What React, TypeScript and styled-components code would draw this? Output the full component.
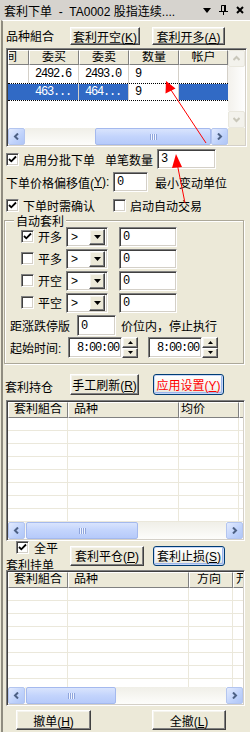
import styled, { createGlobalStyle, css } from "styled-components";

const FONT = `"Liberation Sans", "Noto Sans CJK SC", sans-serif`;
const MONO = `"Liberation Mono", "Noto Sans CJK SC", monospace`;

const GlobalStyle = createGlobalStyle`
  html, body {
    margin: 0;
    padding: 0;
    background: #ece9d8;
  }
  body {
    font-family: ${FONT};
    font-size: 12px;
    color: #000;
  }
`;

const sunken = css`
  border: 1px solid;
  border-color: #808080 #ffffff #ffffff #808080;
  box-shadow: inset 1px 1px 0 #404040, inset -1px -1px 0 #d4d0c8;
`;

const raised = css`
  border: 1px solid;
  border-color: #ffffff #404040 #404040 #ffffff;
  box-shadow: inset -1px -1px 0 #808080, inset 1px 1px 0 #f5f4ee;
`;

const Window = styled.div`
  position: relative;
  width: 250px;
  height: 732px;
  overflow: hidden;
  background: #ece9d8;
  display: flex;
  flex-direction: column;
`;

const TitleBar = styled.div`
  flex: none;
  height: 20px;
  display: flex;
  align-items: center;
  padding-left: 4px;
  background: #d6d3ce;
`;

const TitleText = styled.span`
  white-space: pre;
  font-size: 12px;
`;

const TitleIcons = styled.div`
  margin-left: auto;
  margin-right: 6px;
  display: flex;
  align-items: center;
  gap: 8px;
`;

const Body = styled.div`
  flex: 1;
  margin-left: 1px;
  border-left: 2px solid #8f8c80;
  border-top: 1px solid #ffffff;
  display: flex;
  flex-direction: column;
`;

const Row = styled.div<{ $h: number; $mt?: number; $pl?: number }>`
  flex: none;
  display: flex;
  align-items: center;
  height: ${(p) => p.$h}px;
  margin-top: ${(p) => p.$mt ?? 0}px;
  padding-left: ${(p) => p.$pl ?? 0}px;
`;

const Slot = styled.div<{ $w: number; $ml?: number; $bottom?: boolean }>`
  flex: none;
  width: ${(p) => p.$w}px;
  margin-left: ${(p) => p.$ml ?? 0}px;
  align-self: ${(p) => (p.$bottom ? "flex-end" : "auto")};
  display: flex;
  align-items: center;
  white-space: nowrap;
`;

const Text = styled.span<{ $ml?: number }>`
  margin-left: ${(p) => p.$ml ?? 0}px;
  white-space: nowrap;
`;

const Btn = styled.button<{ $w: number; $h: number; $ml?: number; $focus?: boolean; $red?: boolean }>`
  flex: none;
  width: ${(p) => p.$w}px;
  height: ${(p) => p.$h}px;
  margin: 0 0 0 ${(p) => p.$ml ?? 0}px;
  padding: 0;
  box-sizing: border-box;
  font-family: ${FONT};
  font-size: 12px;
  color: ${(p) => (p.$red ? "#ff0000" : "#000")};
  background: #ece9d8;
  ${raised};
  ${(p) =>
    p.$focus &&
    css`
      border: 1px solid #003c74;
      border-radius: 3px;
      background: linear-gradient(#ffffff, #f4f3ee 70%, #e3dfd3);
      box-shadow: inset 0 0 0 1px #c6d6f7, inset -1px -1px 0 1px #9bb5ea;
    `}

  u {
    text-decoration: underline;
  }
`;

const CheckItem = styled.label<{ $w?: number; $ml?: number; $gap?: number }>`
  flex: none;
  display: flex;
  align-items: center;
  gap: ${(p) => p.$gap ?? 4}px;
  width: ${(p) => (p.$w ? `${p.$w}px` : "auto")};
  margin-left: ${(p) => p.$ml ?? 0}px;
  white-space: nowrap;
`;

const Box = styled.span`
  flex: none;
  width: 13px;
  height: 13px;
  box-sizing: border-box;
  background: #fff;
  ${sunken};
  display: flex;
  align-items: center;
  justify-content: center;
`;

const TextBox = styled.div<{ $w: number; $h: number; $ml?: number }>`
  flex: none;
  width: ${(p) => p.$w}px;
  height: ${(p) => p.$h}px;
  margin-left: ${(p) => p.$ml ?? 0}px;
  box-sizing: border-box;
  background: #fff;
  ${sunken};
  padding-left: 3px;
  display: flex;
  align-items: center;
  font-family: ${MONO};
  font-size: 12px;
  letter-spacing: -1.2px;
`;

const Combo = styled.div`
  flex: none;
  width: 42px;
  height: 20px;
  box-sizing: border-box;
  background: #fff;
  ${sunken};
  padding: 2px 2px 2px 4px;
  display: flex;
  align-items: center;
  justify-content: space-between;
`;

const DropBtn = styled.div`
  width: 16px;
  height: 16px;
  box-sizing: border-box;
  background: #ece9d8;
  ${raised};
  display: flex;
  align-items: center;
  justify-content: center;
`;

const TimeBox = styled.div<{ $ml?: number }>`
  flex: none;
  display: flex;
  height: 21px;
  margin-left: ${(p) => p.$ml ?? 0}px;
`;

const TimeField = styled.div<{ $w: number }>`
  width: ${(p) => p.$w}px;
  box-sizing: border-box;
  background: #fff;
  ${sunken};
  padding-left: 8px;
  display: flex;
  align-items: center;
  font-family: ${MONO};
  font-size: 12px;
  letter-spacing: -1.2px;
`;

const Spin = styled.div`
  width: 16px;
  display: flex;
  flex-direction: column;
`;

const SpinBtn = styled.div`
  flex: 1;
  box-sizing: border-box;
  background: #ece9d8;
  ${raised};
  display: flex;
  align-items: center;
  justify-content: center;
`;

const GroupBox = styled.div`
  position: relative;
  flex: none;
  margin: 6px 0 0 1px;
  width: 240px;
  height: 144px;
  box-sizing: border-box;
  border: 1px solid #aca899;
  box-shadow: inset 1px 1px 0 #fff, 1px 1px 0 #fff;
  padding-top: 5px;
  display: flex;
  flex-direction: column;
`;

const Legend = styled.span`
  position: absolute;
  top: -9px;
  left: 9px;
  padding: 0 2px;
  background: #ece9d8;
`;

const GroupRows = styled.div`
  display: flex;
  flex-direction: column;
  gap: 1px;
`;

/* list views */

const ListBox = styled.div<{ $w: number; $h: number; $ml: number; $mt?: number; $vscroll?: boolean }>`
  flex: none;
  width: ${(p) => p.$w}px;
  height: ${(p) => p.$h}px;
  margin: ${(p) => p.$mt ?? 0}px 0 0 ${(p) => p.$ml}px;
  box-sizing: border-box;
  ${sunken};
  padding: 1px;
  background: #fff;
  display: grid;
  grid-template-columns: ${(p) => (p.$vscroll ? "1fr 17px" : "1fr")};
  grid-template-rows: 1fr 17px;
`;

const ListView = styled.div`
  overflow: hidden;
  display: flex;
  flex-direction: column;
  min-width: 0;
`;

const HeadRow = styled.div<{ $h: number }>`
  flex: none;
  display: flex;
  height: ${(p) => p.$h}px;
`;

const HeadCell = styled.div<{ $w: number; $align?: string; $pad?: number; $indent?: number }>`
  flex: none;
  width: ${(p) => p.$w}px;
  height: 100%;
  box-sizing: border-box;
  background: #ece9d8;
  border: 1px solid;
  border-color: #ffffff #808080 #808080 #ffffff;
  padding-left: ${(p) => p.$pad ?? 0}px;
  text-align: ${(p) => p.$align ?? "left"};
  text-indent: ${(p) => p.$indent ?? 0}px;
  overflow: hidden;
  white-space: nowrap;
  line-height: 12px;
`;

const DataRow = styled.div<{ $h: number; $sel?: boolean }>`
  flex: none;
  display: flex;
  height: ${(p) => p.$h}px;
  box-sizing: border-box;
  ${(p) =>
    p.$sel &&
    css`
      border-top: 1px dotted #000;
      border-bottom: 1px dotted #000;
    `}
`;

const Cell = styled.div<{ $w: number; $sel?: boolean; $line: string }>`
  flex: none;
  width: ${(p) => p.$w}px;
  height: 100%;
  box-sizing: border-box;
  padding-left: 6px;
  border-right: 1px solid ${(p) => p.$line};
  background: ${(p) => (p.$sel ? "#316ac5" : "#fff")};
  color: ${(p) => (p.$sel ? "#fff" : "#000")};
  display: flex;
  align-items: center;
  overflow: hidden;
  white-space: nowrap;
  font-family: ${MONO};
  font-size: 12px;
  letter-spacing: -1.2px;
`;

const GridCell = styled.div<{ $w: number }>`
  flex: none;
  width: ${(p) => p.$w}px;
  height: 100%;
  box-sizing: border-box;
  border-right: 1px solid #ebe8db;
  border-bottom: 1px solid #ebe8db;
`;

const HScroll = styled.div`
  display: flex;
  height: 17px;
  min-width: 0;
`;

const VScroll = styled.div`
  display: flex;
  flex-direction: column;
  width: 17px;
`;

const Track = styled.div<{ $vertical?: boolean }>`
  flex: 1;
  display: flex;
  background: ${(p) =>
    p.$vertical
      ? "linear-gradient(90deg, #f3f1ec, #fefefe)"
      : "linear-gradient(#f0efe8, #fdfdfb)"};
`;

const ScrollBtn = styled.div<{ $off?: boolean }>`
  flex: none;
  width: 17px;
  height: 17px;
  box-sizing: border-box;
  border: 1px solid ${(p) => (p.$off ? "#e9e7dd" : "#b3c5ef")};
  border-radius: 2px;
  background: ${(p) =>
    p.$off ? "#f3f2ec" : "linear-gradient(135deg, #e3ebfe, #bfd2fb 60%, #b0c6f6)"};
  display: flex;
  align-items: center;
  justify-content: center;
`;

const Thumb = styled.div<{ $x: number; $w: number }>`
  flex: none;
  margin-left: ${(p) => p.$x}px;
  width: ${(p) => p.$w}px;
  box-sizing: border-box;
  border: 1px solid #a4b9ee;
  border-radius: 2px;
  background: linear-gradient(#d9e4fd, #c3d4fc 50%, #b6cafa);
  display: flex;
  align-items: center;
  justify-content: center;
`;

const Grip = styled.span`
  width: 7px;
  height: 6px;
  background: repeating-linear-gradient(90deg, #8ea4dc 0 1px, #eef3fe 1px 2px);
`;

const Corner = styled.div`
  background: #ece9d8;
`;

const Overlay = styled.svg`
  position: absolute;
  left: 0;
  top: 0;
  pointer-events: none;
`;

const StackCol = styled.div`
  display: flex;
  flex-direction: column;
  width: 67px;
  flex: none;
`;

/* small drawings */

const Tick = () => (
  <svg width="9" height="9" viewBox="0 0 9 9">
    <path d="M1 4 L3.3 6.3 L8 1.5" fill="none" stroke="#000" strokeWidth="1.8" />
  </svg>
);

const Check = ({ on }: { on?: boolean }) => <Box>{on && <Tick />}</Box>;

const Down = ({ w = 7 }: { w?: number }) => (
  <svg width={w} height={Math.ceil(w / 2)} viewBox={`0 0 ${w} ${Math.ceil(w / 2)}`}>
    <path d={`M0 0 H${w} L${w / 2} ${Math.ceil(w / 2)} Z`} fill="#000" />
  </svg>
);

const Up = ({ w = 5 }: { w?: number }) => (
  <svg width={w} height={Math.ceil(w / 2)} viewBox={`0 0 ${w} ${Math.ceil(w / 2)}`}>
    <path d={`M0 ${Math.ceil(w / 2)} H${w} L${w / 2} 0 Z`} fill="#000" />
  </svg>
);

const Chevron = ({ dir, off }: { dir: "l" | "r" | "u" | "d"; off?: boolean }) => {
  const d = {
    l: "M5 0.5 L2 3.5 L5 6.5",
    r: "M2 0.5 L5 3.5 L2 6.5",
    u: "M0.5 5 L3.5 2 L6.5 5",
    d: "M0.5 2 L3.5 5 L6.5 2",
  }[dir];
  return (
    <svg width="7" height="7" viewBox="0 0 7 7">
      <path d={d} fill="none" stroke={off ? "#c9c7ba" : "#4d6185"} strokeWidth="2" />
    </svg>
  );
};

const HBar = ({ x, w }: { x: number; w: number }) => (
  <HScroll>
    <ScrollBtn>
      <Chevron dir="l" />
    </ScrollBtn>
    <Track>
      <Thumb $x={x} $w={w}>
        <Grip />
      </Thumb>
    </Track>
    <ScrollBtn>
      <Chevron dir="r" />
    </ScrollBtn>
  </HScroll>
);

const Time = ({ ml }: { ml?: number }) => (
  <TimeBox $ml={ml}>
    <TimeField $w={54}>8:00:00</TimeField>
    <Spin>
      <SpinBtn>
        <Up />
      </SpinBtn>
      <SpinBtn>
        <Down w={5} />
      </SpinBtn>
    </Spin>
  </TimeBox>
);

const autoRows = [
  { label: "开多", on: true },
  { label: "平多", on: false },
  { label: "开空", on: false },
  { label: "平空", on: false },
];

const holdCols = [
  { t: "套利組合", w: 60, pad: 5 },
  { t: "品种", w: 111, pad: 5 },
  { t: "均价", w: 60, pad: 1 },
  { t: "", w: 60, pad: 5 },
];

const orderCols = [
  { t: "套利組合", w: 60, pad: 5 },
  { t: "品种", w: 121, pad: 5 },
  { t: "方向", w: 44, pad: 7 },
  { t: "开平", w: 60, pad: 2 },
];

const EmptyGrid = ({ cols, rows }: { cols: { w: number }[]; rows: number }) => (
  <>
    {Array.from({ length: rows }).map((_, r) => (
      <DataRow key={r} $h={13}>
        {cols.map((c, i) => (
          <GridCell key={i} $w={c.w} />
        ))}
      </DataRow>
    ))}
  </>
);

const App = () => {
  return (
    <>
      <GlobalStyle />
      <Window>
        <TitleBar>
          <TitleText>套利下单  -  TA0002 股指连续....</TitleText>
          <TitleIcons>
            <svg width="8" height="5" viewBox="0 0 8 5">
              <path d="M0 0 H8 L4 5 Z" fill="#000" />
            </svg>
            <svg width="9" height="10" viewBox="0 0 9 10">
              <path d="M2.5 0.5 H6.5 V6 M2.5 0.5 V6" fill="none" stroke="#000" />
              <rect x="5" y="0" width="2" height="6" fill="#000" />
              <rect x="0" y="6" width="9" height="1" fill="#000" />
              <rect x="4" y="6" width="1" height="4" fill="#000" />
            </svg>
            <svg width="8" height="8" viewBox="0 0 8 8">
              <path d="M1 1 L7 7 M7 1 L1 7" stroke="#000" strokeWidth="2" />
            </svg>
          </TitleIcons>
        </TitleBar>

        <Body>
          <Row $h={19} $mt={5} $pl={3}>
            <Slot $w={64}>品种組合</Slot>
            <Btn $w={70} $h={18}>
              套利开空(<u>K</u>)
            </Btn>
            <Btn $w={73} $h={18} $ml={12}>
              套利开多(<u>A</u>)
            </Btn>
          </Row>

          <ListBox $w={241} $h={99} $ml={3} $mt={3} $vscroll>
            <ListView>
              <HeadRow $h={15}>
                <HeadCell $w={21} $indent={-16}>
                  时间
                </HeadCell>
                <HeadCell $w={50} $align="center">
                  委买
                </HeadCell>
                <HeadCell $w={50} $align="center">
                  委卖
                </HeadCell>
                <HeadCell $w={50} $align="center">
                  数量
                </HeadCell>
                <HeadCell $w={49} $align="center">
                  帐户
                </HeadCell>
              </HeadRow>
              <DataRow $h={18}>
                <Cell $w={21} $line="#d4d0c8" />
                <Cell $w={50} $line="#d4d0c8">2492.6</Cell>
                <Cell $w={50} $line="#d4d0c8">2493.0</Cell>
                <Cell $w={50} $line="#d4d0c8">9</Cell>
                <Cell $w={49} $line="#d4d0c8" />
              </DataRow>
              <DataRow $h={18} $sel>
                <Cell $w={21} $line="#316ac5" $sel />
                <Cell $w={50} $line="#d4d0c8" $sel>
                  463...
                </Cell>
                <Cell $w={50} $line="#d4d0c8" $sel>
                  464...
                </Cell>
                <Cell $w={50} $line="#d4d0c8">9</Cell>
                <Cell $w={49} $line="#316ac5" $sel />
              </DataRow>
            </ListView>
            <VScroll>
              <ScrollBtn $off>
                <Chevron dir="u" off />
              </ScrollBtn>
              <Track $vertical />
              <ScrollBtn $off>
                <Chevron dir="d" off />
              </ScrollBtn>
            </VScroll>
            <HBar x={70} w={116} />
            <Corner />
          </ListBox>

          <Row $h={20} $mt={2} $pl={3}>
            <CheckItem $w={99}>
              <Check on />
              启用分批下单
            </CheckItem>
            <Slot $w={52}>单笔数量</Slot>
            <TextBox $w={59} $h={20}>
              3
            </TextBox>
          </Row>

          <Row $h={20} $mt={3} $pl={3}>
            <Slot $w={107}>
              下单价格偏移值(<u>Y</u>):
            </Slot>
            <TextBox $w={35} $h={20}>
              0
            </TextBox>
            <Text $ml={7}>最小变动单位</Text>
          </Row>

          <Row $h={18} $mt={4} $pl={3}>
            <CheckItem $w={107}>
              <Check on />
              下单时需确认
            </CheckItem>
            <CheckItem>
              <Check />
              启动自动交易
            </CheckItem>
          </Row>

          <GroupBox>
            <Legend>自动套利</Legend>
            <GroupRows>
              {autoRows.map((r) => (
                <Row key={r.label} $h={21} $pl={16}>
                  <CheckItem $w={45}>
                    <Check on={r.on} />
                    {r.label}
                  </CheckItem>
                  <Combo>
                    <span>&gt;</span>
                    <DropBtn>
                      <Down />
                    </DropBtn>
                  </Combo>
                  <TextBox $w={58} $h={20} $ml={11}>
                    0
                  </TextBox>
                </Row>
              ))}
            </GroupRows>
            <Row $h={21} $mt={2} $pl={5}>
              <Slot $w={67}>距涨跌停版</Slot>
              <TextBox $w={39} $h={21}>
                0
              </TextBox>
              <Text $ml={5}>价位内，停止执行</Text>
            </Row>
            <Row $h={21} $mt={1} $pl={5}>
              <Slot $w={58}>起始时间:</Slot>
              <Time />
              <Time ml={10} />
            </Row>
          </GroupBox>

          <Row $h={22} $mt={9} $pl={2}>
            <Slot $w={65} $bottom>
              套利持仓
            </Slot>
            <Btn $w={69} $h={21}>
              手工刷新(<u>R</u>)
            </Btn>
            <Btn $w={71} $h={21} $ml={14} $focus $red>
              应用设置(<u>Y</u>)
            </Btn>
          </Row>

          <ListBox $w={239} $h={141} $ml={3} $mt={5}>
            <ListView>
              <HeadRow $h={16}>
                {holdCols.map((c, i) => (
                  <HeadCell key={i} $w={c.w} $pad={c.pad}>
                    {c.t}
                  </HeadCell>
                ))}
              </HeadRow>
              <EmptyGrid cols={holdCols} rows={8} />
            </ListView>
            <HBar x={1} w={112} />
          </ListBox>

          <Row $h={29}>
            <StackCol>
              <CheckItem $ml={13} $gap={5}>
                <Check on />
                全平
              </CheckItem>
              <Text $ml={3}>套利挂单</Text>
            </StackCol>
            <Btn $w={74} $h={20}>
              套利平仓(<u>P</u>)
            </Btn>
            <Btn $w={72} $h={20} $ml={9} $focus>
              套利止损(<u>S</u>)
            </Btn>
          </Row>

          <ListBox $w={239} $h={136} $ml={3}>
            <ListView>
              <HeadRow $h={16}>
                {orderCols.map((c, i) => (
                  <HeadCell key={i} $w={c.w} $pad={c.pad}>
                    {c.t}
                  </HeadCell>
                ))}
              </HeadRow>
              <EmptyGrid cols={orderCols} rows={8} />
            </ListView>
            <HBar x={1} w={90} />
          </ListBox>

          <Row $h={20} $mt={4}>
            <Btn $w={75} $h={20} $ml={13}>
              撤单(<u>H</u>)
            </Btn>
            <Btn $w={74} $h={20} $ml={61}>
              全撤(<u>L</u>)
            </Btn>
          </Row>
        </Body>

        <Overlay width="250" height="732" viewBox="0 0 250 732">
          <line x1="206" y1="143" x2="169" y2="87" stroke="#ff0000" strokeWidth="1" />
          <polygon points="166,81 175.5,88.5 165.5,93.5" fill="#ff0000" />
          <line x1="185" y1="203" x2="177" y2="163" stroke="#ff0000" strokeWidth="1" />
          <polygon points="176,154 182,167 172,168" fill="#ff0000" />
        </Overlay>
      </Window>
    </>
  );
};

export default App;
